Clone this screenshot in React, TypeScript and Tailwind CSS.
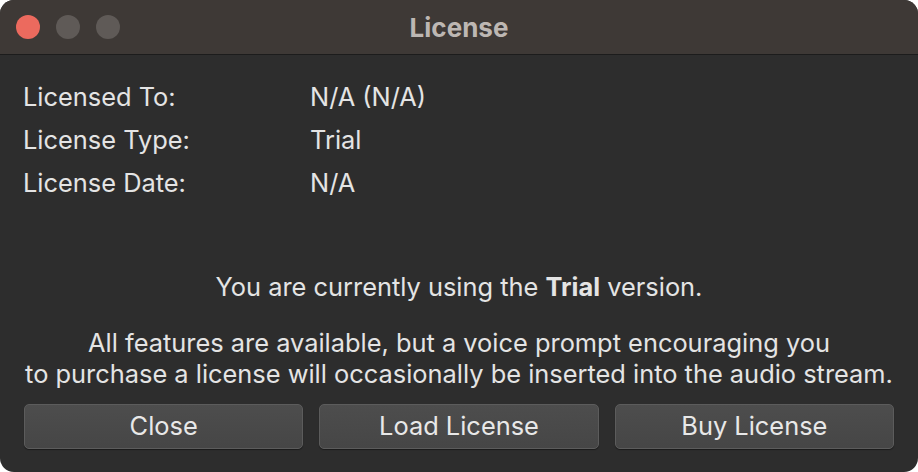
import React from 'react';

const rows = [
  { label: 'Licensed To:', value: 'N/A (N/A)' },
  { label: 'License Type:', value: 'Trial' },
  { label: 'License Date:', value: 'N/A' },
];

const buttons = ['Close', 'Load License', 'Buy License'];

const App: React.FC = () => {
  return (
    <div className="w-[918px] h-[472px] bg-white" style={{ fontFamily: 'Inter, "Noto Sans", sans-serif' }}>
      <div className="w-full h-full rounded-[14px] overflow-hidden flex flex-col bg-[#2d2d2d]">
        {/* Title bar */}
        <div className="h-[55px] flex items-center bg-[#3e3936] border-b border-[#1c1c1c] relative shrink-0">
          <div className="flex gap-4 pl-4">
            <span className="w-6 h-6 rounded-full bg-[#ec6a5e]"></span>
            <span className="w-6 h-6 rounded-full bg-[#5f5a57]"></span>
            <span className="w-6 h-6 rounded-full bg-[#5f5a57]"></span>
          </div>
          <div className="absolute inset-0 flex items-center justify-center text-[26px] font-bold text-[#bdb7b3] pointer-events-none">
            License
          </div>
        </div>

        {/* Body */}
        <div className="flex-1 flex flex-col px-6 text-[#e4e4e4] text-[25.4px]">
          <div className="pt-[26px] flex flex-col gap-[12px]">
            {rows.map((row) => (
              <div key={row.label} className="flex leading-[31px]">
                <span className="w-[287px] -ml-px">{row.label}</span>
                <span>{row.value}</span>
              </div>
            ))}
          </div>

          <div className="mt-[73px] text-center leading-[31px]">
            You are currently using the <span className="font-bold">Trial</span> version.
          </div>

          <div className="mt-[25px] text-center leading-[31px] whitespace-nowrap">
            All features are available, but a voice prompt encouraging you
            <br />
            to purchase a license will occasionally be inserted into the audio stream.
          </div>

          <div className="mt-[15px] grid grid-cols-3 gap-4">
            {buttons.map((b) => (
              <button
                key={b}
                className="h-[45px] rounded-[5px] border border-[#5c5c5c] bg-gradient-to-b from-[#4d4d4d] to-[#464646] text-[#e8e8e8] text-[25.4px] shadow-[0_1px_1px_rgba(0,0,0,0.4)]"
              >
                {b}
              </button>
            ))}
          </div>
        </div>
      </div>
    </div>
  );
};

export default App;
